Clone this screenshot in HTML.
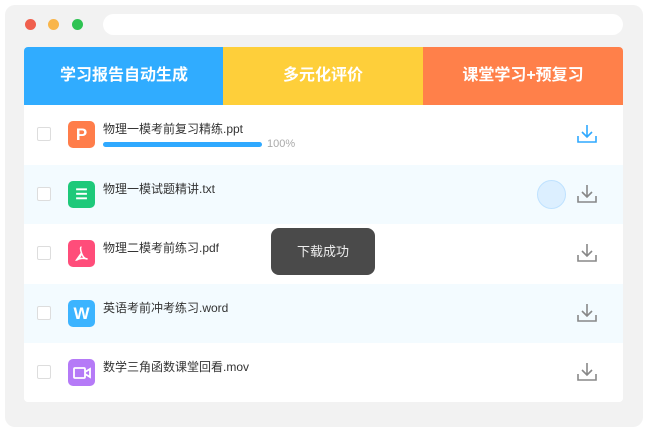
<!DOCTYPE html>
<html><head><meta charset="utf-8"><style>
*{margin:0;padding:0;box-sizing:border-box}
body{width:648px;height:432px;background:#fff;font-family:"Liberation Sans","Noto Sans CJK SC",sans-serif;position:relative;overflow:hidden}
.panel{position:absolute;left:5px;top:5px;width:638px;height:422px;background:#f2f2f2;border-radius:10px}
.dot{position:absolute;top:19px;width:11px;height:11px;border-radius:50%}
.url{position:absolute;left:103px;top:14px;width:520px;height:21px;background:#fff;border-radius:11px}
.card{position:absolute;left:24px;top:47px;width:599px;height:355px;background:#fff;border-radius:4px;overflow:hidden}
.tab{position:absolute;top:0;height:58px;width:200px;color:#fff;font-size:16px;line-height:58px;text-align:center;font-weight:bold}
.row{position:absolute;left:0;width:599px;height:59.6px}
.cb{position:absolute;left:13px;top:22px;width:14px;height:14px;border:1px solid #ddd;border-radius:2px;background:#fff}
.ic{position:absolute;left:44px;top:16px;width:27px;height:27px;border-radius:5px;color:#fff;font-weight:bold;font-size:17px;text-align:center;line-height:27px}
.nm{position:absolute;left:79px;top:15px;font-size:12px;color:#333}
.dl{position:absolute;left:552px;top:18px}
</style></head><body>
<div class="panel"></div>
<div class="dot" style="left:25px;background:#f05f4d"></div>
<div class="dot" style="left:48px;background:#f9b54a"></div>
<div class="dot" style="left:72px;background:#2ec352"></div>
<div class="url"></div>
<div class="card">
<div class="tab" style="left:0;background:#30acff">学习报告自动生成</div>
<div class="tab" style="left:199px;background:#fecf3a">多元化评价</div>
<div class="tab" style="left:399px;background:#ff804a">课堂学习+预复习</div>
<div style="position:absolute;left:492px;top:58px;width:0;height:0;border-left:6px solid transparent;border-right:6px solid transparent;border-top:8px solid #ff804a"></div>

<div class="row" style="top:58px;background:#fff">
<div class="cb"></div><div class="ic" style="background:#ff7d4a">P</div>
<div class="nm">物理一模考前复习精练.ppt</div>
<div style="position:absolute;left:79px;top:37px;width:159px;height:5px;border-radius:3px;background:#2fa9ff"></div>
<div style="position:absolute;left:243px;top:33px;font-size:11px;color:#aaa">100%</div>
<svg class="dl" width="22" height="22" viewBox="0 0 22 22" fill="none" stroke="#2fa9ff" stroke-width="1.6"><path d="M11 2v12M6 9l5 5 5-5M2 13v6h18v-6"/></svg>
</div>
<div class="row" style="top:117.6px;background:#f3fbff">
<div class="cb"></div><div class="ic" style="background:#1ec97a;font-size:14px">☰</div>
<div class="nm">物理一模试题精讲.txt</div>
<div style="position:absolute;left:513px;top:15px;width:29px;height:29px;border-radius:50%;background:#dcefff;border:1px solid #bfe2ff"></div>
<svg class="dl" width="22" height="22" viewBox="0 0 22 22" fill="none" stroke="#888" stroke-width="1.6"><path d="M11 2v12M6 9l5 5 5-5M2 13v6h18v-6"/></svg>
</div>
<div class="row" style="top:177.2px;background:#fff">
<div class="cb"></div><div class="ic" style="background:#ff4d7a"><svg width="17" height="17" viewBox="0 0 17 17" fill="none" stroke="#fff" stroke-width="1.5" style="margin-top:5px"><path d="M8.5 2c-1.5 0 -1 3 0 6l-5 7c2 0 4-3 5-7 1 3 3 6 6 6 -3-1-8-1-11 1"/></svg></div>
<div class="nm">物理二模考前练习.pdf</div>
<svg class="dl" width="22" height="22" viewBox="0 0 22 22" fill="none" stroke="#888" stroke-width="1.6"><path d="M11 2v12M6 9l5 5 5-5M2 13v6h18v-6"/></svg>
</div>
<div class="row" style="top:236.8px;background:#f3fbff">
<div class="cb"></div><div class="ic" style="background:#3cb4ff">W</div>
<div class="nm">英语考前冲考练习.word</div>
<svg class="dl" width="22" height="22" viewBox="0 0 22 22" fill="none" stroke="#888" stroke-width="1.6"><path d="M11 2v12M6 9l5 5 5-5M2 13v6h18v-6"/></svg>
</div>
<div class="row" style="top:296.4px;background:#fff">
<div class="cb"></div><div class="ic" style="background:#b57af7"><svg width="18" height="14" viewBox="0 0 18 14" fill="none" stroke="#fff" stroke-width="1.8" style="margin-top:7px"><rect x="1" y="2" width="11" height="10" rx="1"/><path d="M12 6l5-3v8l-5-3"/></svg></div>
<div class="nm">数学三角函数课堂回看.mov</div>
<svg class="dl" width="22" height="22" viewBox="0 0 22 22" fill="none" stroke="#888" stroke-width="1.6"><path d="M11 2v12M6 9l5 5 5-5M2 13v6h18v-6"/></svg>
</div>
<div style="position:absolute;left:247px;top:181px;width:104px;height:47px;background:#4a4a4a;border-radius:8px;color:#eee;font-size:13px;line-height:47px;text-align:center">下载成功</div>
</div>
</body></html>
